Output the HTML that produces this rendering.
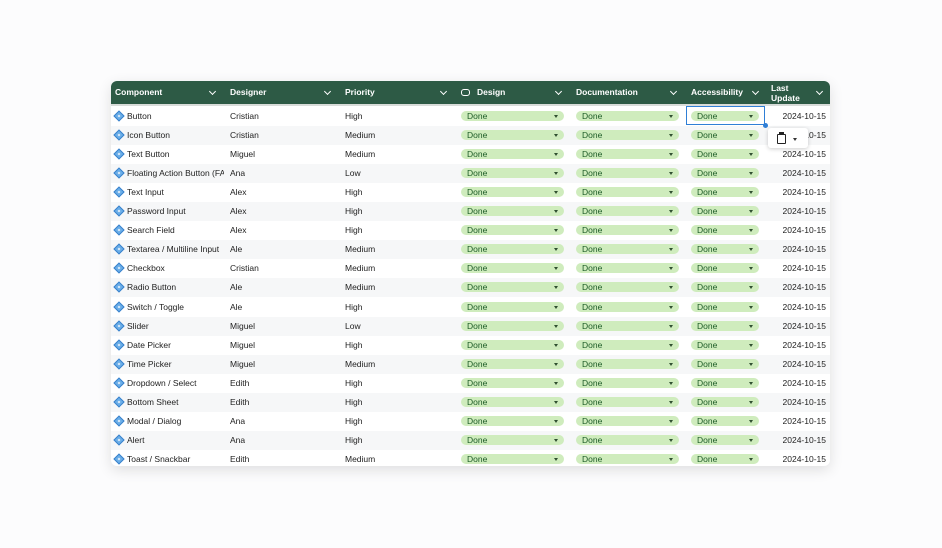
<!DOCTYPE html><html><head><style>
body{margin:0;width:942px;height:548px;background:#fcfcfd;font-family:"Liberation Sans",sans-serif;overflow:hidden;position:relative}
.card{position:absolute;left:111px;top:81px;width:719px;height:385px;background:#fff;border-radius:6px;box-shadow:0 4px 14px rgba(0,0,0,.12);overflow:hidden}
.hd{position:absolute;left:0;top:0;width:719px;height:23px;background:#2d5a45;border-bottom:2px solid #d8dcd9}
.hc{position:absolute;top:0;height:23px;line-height:23px;color:#fff;font-size:8.5px;font-weight:bold}
.chev{position:absolute;top:8px;width:4px;height:4px;border-right:1.2px solid #fff;border-bottom:1.2px solid #fff;transform:rotate(45deg)}
.row{position:absolute;left:0;width:719px;height:19px;font-size:8.5px;color:#222;line-height:19px}
.row.g{background:#f6f7f8}
.c{position:absolute;top:0;white-space:nowrap;overflow:hidden}
.chip{position:absolute;top:4px;height:10px;line-height:11px;background:#cfecbd;border-radius:5px;color:#1d5c27;font-size:8.5px;padding-left:6px;box-sizing:border-box}
.chip:after{content:"";position:absolute;right:6px;top:4px;border-left:2.5px solid transparent;border-right:2.5px solid transparent;border-top:3px solid #2f4f2f}
.ic{position:absolute;left:4px;top:5px;width:8px;height:8px;transform:rotate(45deg);background:#6aaee8;border:1px solid #3a82cc;box-sizing:border-box}
.ic:after{content:"";position:absolute;left:2px;top:2px;width:2px;height:2px;background:#e4f0fc}
</style></head><body>
<div class="card">
<div class="hd">
<div class="hc" style="left:4px">Component</div><div class="chev" style="left:99px"></div>
<div class="hc" style="left:119px">Designer</div><div class="chev" style="left:214px"></div>
<div class="hc" style="left:234px">Priority</div><div class="chev" style="left:330px"></div>
<div style="position:absolute;left:350px;top:8px;width:7px;height:5px;border:1.2px solid #fff;border-radius:3px"></div>
<div class="hc" style="left:366px">Design</div><div class="chev" style="left:445px"></div>
<div class="hc" style="left:465px">Documentation</div><div class="chev" style="left:560px"></div>
<div class="hc" style="left:580px">Accessibility</div><div class="chev" style="left:642px"></div>
<div class="hc" style="left:660px;line-height:10px;top:2px">Last<br>Update</div><div class="chev" style="left:706px"></div>
</div>
<div id="rows"></div>
</div>
<div style="position:absolute;left:686px;top:106px;width:79px;height:19px;border:1.5px solid #2f7fd6;box-sizing:border-box"></div>
<div style="position:absolute;left:763px;top:123px;width:5px;height:5px;border-radius:50%;background:#2f7fd6"></div>
<div style="position:absolute;left:768px;top:128px;width:40px;height:20px;background:#fff;border-radius:3px;box-shadow:0 1px 4px rgba(0,0,0,.2)">
<div style="position:absolute;left:9px;top:6px;width:7px;height:8px;border:1.3px solid #222;border-radius:1px"></div>
<div style="position:absolute;left:11px;top:4px;width:5px;height:2px;background:#222"></div>
<div style="position:absolute;left:25px;top:10px;border-left:2.5px solid transparent;border-right:2.5px solid transparent;border-top:3px solid #333"></div>
</div>
<script>
var d=[["Button","Cristian","High"],["Icon Button","Cristian","Medium"],["Text Button","Miguel","Medium"],["Floating Action Button (FAB)","Ana","Low"],["Text Input","Alex","High"],["Password Input","Alex","High"],["Search Field","Alex","High"],["Textarea / Multiline Input","Ale","Medium"],["Checkbox","Cristian","Medium"],["Radio Button","Ale","Medium"],["Switch / Toggle","Ale","High"],["Slider","Miguel","Low"],["Date Picker","Miguel","High"],["Time Picker","Miguel","Medium"],["Dropdown / Select","Edith","High"],["Bottom Sheet","Edith","High"],["Modal / Dialog","Ana","High"],["Alert","Ana","High"],["Toast / Snackbar","Edith","Medium"]];
var h="";d.forEach(function(r,i){var t=25.5+i*19.1;
h+='<div class="row'+(i%2?' g':'')+'" style="top:'+t+'px"><div class="ic"></div><div class="c" style="left:16px;width:97px">'+r[0]+'</div><div class="c" style="left:119px">'+r[1]+'</div><div class="c" style="left:234px">'+r[2]+'</div><div class="chip" style="left:350px;width:103px">Done</div><div class="chip" style="left:465px;width:103px">Done</div><div class="chip" style="left:580px;width:68px">Done</div><div class="c" style="right:4px">2024-10-15</div></div>';});
document.getElementById("rows").innerHTML=h;
</script>
</body></html>
